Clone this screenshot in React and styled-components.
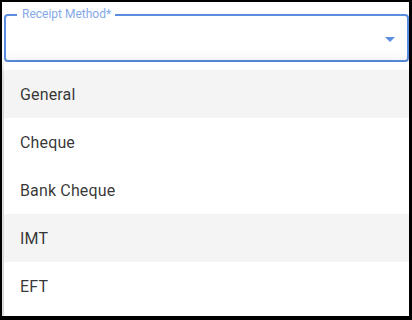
import React from "react";
import styled, { createGlobalStyle } from "styled-components";

const GlobalStyle = createGlobalStyle`
  html, body {
    margin: 0;
    padding: 0;
    background: #ffffff;
  }
  body {
    font-family: Roboto, "Liberation Sans", sans-serif;
  }
`;

const Frame = styled.div`
  width: 412px;
  height: 320px;
  box-sizing: border-box;
  border-style: solid;
  border-color: #000000;
  border-width: 2px 3px 4px 2px;
  background: #ffffff;
  overflow: hidden;
  display: flex;
  flex-direction: column;
`;

const Field = styled.div`
  position: relative;
  flex: 0 0 auto;
  margin: 12px 0 0 2px;
  height: 48px;
  box-sizing: border-box;
  border: 2px solid #5b8ee0;
  border-radius: 4px;
  background: #ffffff;
  display: flex;
  align-items: center;
  justify-content: flex-end;
  padding-right: 12px;
`;

const FloatLabel = styled.span`
  position: absolute;
  top: -9px;
  left: 11px;
  padding: 0 4px 0 5px;
  background: #ffffff;
  font-family: Roboto, "Liberation Sans", sans-serif;
  font-size: 12px;
  line-height: 14px;
  color: #84a9e8;
`;

const Arrow = styled.svg`
  width: 10px;
  height: 5px;
  margin-top: 2px;
`;

const Menu = styled.ul`
  flex: 0 0 auto;
  list-style: none;
  margin: 0 0 0 2px;
  padding: 8px 0;
  background: #ffffff;
  position: relative;
  box-shadow: 0 5px 5px -3px rgba(0, 0, 0, 0.2),
    0 8px 10px 1px rgba(0, 0, 0, 0.14), 0 3px 14px 2px rgba(0, 0, 0, 0.12);
`;

const Item = styled.li`
  height: 48px;
  display: flex;
  align-items: center;
  padding: 0 16px;
  font-family: Roboto, "Liberation Sans", sans-serif;
  font-size: 16px;
  letter-spacing: 0.15px;
  color: rgba(0, 0, 0, 0.8);
  background: ${({ $shaded }) => ($shaded ? "#f4f4f4" : "#ffffff")};
`;

const options = [
  { label: "General", shaded: true },
  { label: "Cheque" },
  { label: "Bank Cheque" },
  { label: "IMT", shaded: true },
  { label: "EFT" },
];

const App = () => {
  return (
    <>
      <GlobalStyle />
      <Frame>
        <Field>
          <FloatLabel>Receipt Method*</FloatLabel>
          <Arrow viewBox="0 0 10 5">
            <path d="M0 0 L10 0 L5 5 Z" fill="#5b8ee0" />
          </Arrow>
        </Field>
        <Menu>
          {options.map((o) => (
            <Item key={o.label} $shaded={o.shaded}>
              {o.label}
            </Item>
          ))}
        </Menu>
      </Frame>
    </>
  );
};

export default App;
